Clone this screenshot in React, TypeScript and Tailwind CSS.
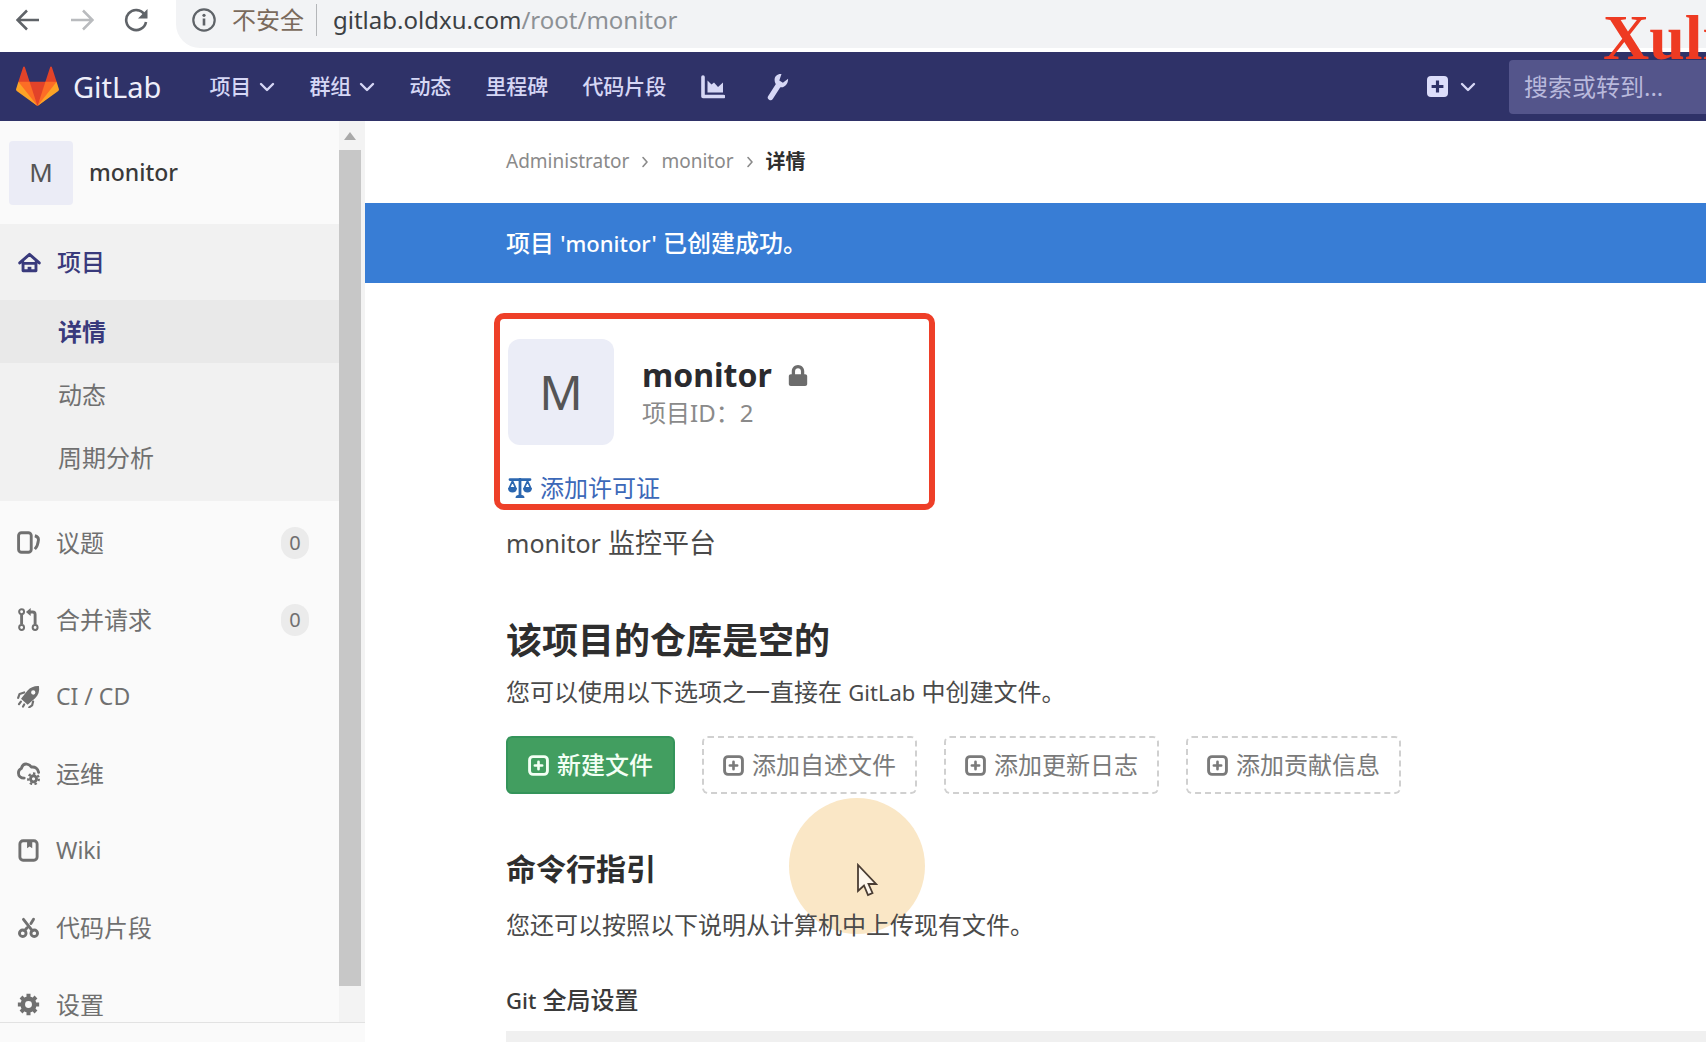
import React from "react";
import { FaLock } from "react-icons/fa";

type IconProps = { className?: string };

const stroke = {
  fill: "none",
  stroke: "currentColor",
  strokeWidth: 2,
  strokeLinecap: "round" as const,
  strokeLinejoin: "round" as const,
};

function Chevron({ className }: IconProps) {
  return (
    <svg viewBox="0 0 16 10" className={className} aria-hidden="true">
      <path d="M2 2l6 6 6-6" {...stroke} strokeWidth={2.4} />
    </svg>
  );
}

function CrumbChevron() {
  return (
    <svg viewBox="0 0 8 12" className="h-3 w-2 text-[#8a8a8a]" aria-hidden="true">
      <path d="M2 1.500l4 4.500-4 4.500" {...stroke} strokeWidth={1.6} />
    </svg>
  );
}

function Tanuki() {
  return (
    <svg viewBox="0 0 36 36" className="h-[43px] w-[43px]" aria-hidden="true">
      <path fill="#e24329" d="M2 14l9.380 9v-9l-4-12.280c-.205-.632-1.176-.632-1.380 0z" />
      <path fill="#e24329" d="M34 14l-9.380 9v-9l4-12.280c.205-.632 1.176-.632 1.380 0z" />
      <path fill="#e24329" d="M18 34.380L3 14h30z" />
      <path fill="#fc6d26" d="M18 34.380L11.380 14H2l4 11z" />
      <path fill="#fc6d26" d="M18 34.380L24.620 14H34l-4 11z" />
      <path fill="#fca326" d="M2 14L.1 20.160c-.18.565 0 1.200.5 1.560L18 34.380z" />
      <path fill="#fca326" d="M34 14l1.900 6.160c.18.565 0 1.200-.5 1.560L18 34.380z" />
    </svg>
  );
}

function ChartIcon({ className }: IconProps) {
  return (
    <svg viewBox="0 0 24 24" className={className} aria-hidden="true">
      <path d="M2 2v19.500h20.500" {...stroke} strokeWidth={3.6} />
      <path d="M6.500 17.500V5.500l4 4 2.500-2 4 4.500 5-4.500v10z" fill="currentColor" />
    </svg>
  );
}

function WrenchIcon({ className }: IconProps) {
  return (
    <svg viewBox="0 0 22 28" className={className} aria-hidden="true">
      <path d="M3.500 24.500L11.500 12" {...stroke} strokeWidth={5.400} />
      <path d="M14.500 1C10.500.6 7.500 3.200 7.600 7c.1 4 3 7.500 7 7.300 3.600-.2 6.600-3.600 6.500-8.600l-5.200 4-3.600-2.300z" fill="currentColor" />
    </svg>
  );
}

function ScaleIcon({ className }: IconProps) {
  return (
    <svg viewBox="0 0 24 20" className={className} aria-hidden="true">
      <path d="M2 1.600h20M12 1v16" {...stroke} strokeWidth={2.800} />
      <path d="M7.500 20c0-2 1.500-3.200 4.500-3.200s4.500 1.200 4.500 3.200z" fill="currentColor" />
      <path d="M4.500 3L1.300 10h6.400zM19.500 3l-3.200 7h6.400z" {...stroke} strokeWidth={1.800} />
      <path d="M0 10h9c0 3-2 4.600-4.500 4.600S0 13 0 10zM15 10h9c0 3-2 4.600-4.500 4.600S15 13 15 10z" fill="currentColor" />
    </svg>
  );
}

function HomeIcon({ className }: IconProps) {
  return (
    <svg viewBox="0 0 16 16" className={className} aria-hidden="true">
      <path d="M1.200 8.300L8 2.300l6.800 6M3.500 8v5.700h9V8M3.500 8.600h9" {...stroke} />
      <path d="M6.700 11h2.600v3H6.700z" fill="currentColor" />
    </svg>
  );
}

function IssuesIcon({ className }: IconProps) {
  return (
    <svg viewBox="0 0 16 16" className={className} aria-hidden="true">
      <rect x="1.100" y="1.200" width="8.800" height="13.600" rx="2" {...stroke} />
      <path d="M12.400 3.300c1.900.5 2.700 1.300 2.500 3-.2 2.300-.8 4.500-2.500 6.300" {...stroke} strokeLinecap="butt" />
    </svg>
  );
}

function MergeIcon({ className }: IconProps) {
  return (
    <svg viewBox="0 0 16 16" className={className} aria-hidden="true">
      <g {...stroke} strokeWidth={1.400}>
        <circle cx="3.200" cy="2.600" r="1.700" />
        <circle cx="3.200" cy="13.600" r="1.700" />
        <circle cx="12.600" cy="13.600" r="1.700" />
      </g>
      <path d="M3.200 4.500v7M12.600 11.500V4.500c0-1.200-.5-1.700-1.700-1.700H9" {...stroke} strokeLinecap="butt" />
      <path d="M9.500 0v5.600L6.200 2.800z" fill="currentColor" />
    </svg>
  );
}

function RocketIcon({ className }: IconProps) {
  return (
    <svg viewBox="0 0 16 16" className={className} aria-hidden="true">
      <path fillRule="evenodd" fill="currentColor" d="M15.300.8c.5 3.400-.4 6.200-2.700 8.500l-5.200 4.500-4.600-4.300L7.200 4C9.500 1.700 12 .6 15.300.8zM11.300 3.700a1.500 1.500 0 1 0 0 3 1.500 1.500 0 0 0 0-3z" />
      <path d="M5 5.200L1.800 6.200.8 9M11.200 11.500l-.7 2.700-2 1.300M2.700 11.500l-1.300 1.800M5 13.500l-.8 1.500" {...stroke} strokeWidth={1.500} />
    </svg>
  );
}

function OpsIcon({ className }: IconProps) {
  return (
    <svg viewBox="0 0 16 16" className={className} aria-hidden="true">
      <path d="M5 11.200c-2.500 0-4-1.600-4-3.600 0-1.500.8-2.600 2-3.100C3.700 2.300 5.200 1.200 7 1.500c1.400.2 2.400 1 3 2 2.700-.3 4.600 1.200 5 3.700" {...stroke} />
      <circle cx="11.500" cy="11.700" r="2.100" {...stroke} />
      <circle cx="11.500" cy="11.700" r="3.700" {...stroke} strokeLinecap="butt" strokeWidth={1.600} strokeDasharray="1.660 1.660" />
    </svg>
  );
}

function WikiIcon({ className }: IconProps) {
  return (
    <svg viewBox="0 0 16 16" className={className} aria-hidden="true">
      <rect x="2" y="1.200" width="12" height="13.600" rx="2.200" {...stroke} />
      <path d="M7 1.500h3.600v5L8.800 5.200 7 6.500z" fill="currentColor" />
    </svg>
  );
}

function SnippetIcon({ className }: IconProps) {
  return (
    <svg viewBox="0 0 16 16" className={className} aria-hidden="true">
      <circle cx="4" cy="12" r="2.300" {...stroke} />
      <circle cx="12" cy="12" r="2.300" {...stroke} />
      <path d="M4.500 2.300l6.200 8M11.500 2.300L9.700 5.200M7 8.200l-1.700 2" {...stroke} />
    </svg>
  );
}

function GearIcon({ className }: IconProps) {
  return (
    <svg viewBox="0 0 16 16" className={className} aria-hidden="true">
      <circle cx="8" cy="8" r="4" {...stroke} strokeWidth={3.200} />
      <path
        d="M8 .6v2.400M8 13v2.400M.6 8H3M13 8h2.400M2.800 2.800l1.600 1.600M11.600 11.600l1.600 1.600M2.800 13.200l1.600-1.600M11.600 4.400l1.600-1.600"
        {...stroke}
        strokeLinecap="butt"
        strokeWidth={2.800}
      />
    </svg>
  );
}

function PlusBox({ className }: IconProps) {
  return (
    <svg viewBox="0 0 16 16" className={className} aria-hidden="true">
      <rect x="1.200" y="1.200" width="13.600" height="13.600" rx="2.600" {...stroke} strokeWidth={2.200} />
      <path d="M8 5.200v5.600M5.200 8h5.600" {...stroke} />
    </svg>
  );
}

function SolidPlus({ className }: IconProps) {
  return (
    <svg viewBox="0 0 16 16" className={className} aria-hidden="true">
      <rect width="16" height="16" rx="3" fill="currentColor" />
      <path d="M8 3.500v9M3.500 8h9" stroke="#2f3268" strokeWidth="2.400" />
    </svg>
  );
}

function BrowserBar() {
  return (
    <div className="flex h-[52px] shrink-0 bg-white pl-4">
      <div className="flex h-10 items-center gap-[30px] pr-7 text-[#5f6368]">
        <button aria-label="Back">
          <svg viewBox="0 0 24 24" className="h-6 w-6"><path d="M23 12H2M11 2.500L1.500 12l9.500 9.500" {...stroke} strokeWidth={2.500} strokeLinecap="butt" strokeLinejoin="miter" /></svg>
        </button>
        <button aria-label="Forward" className="text-[#b9bbbe]">
          <svg viewBox="0 0 24 24" className="h-6 w-6"><path d="M1 12h21M13 2.500l9.500 9.500-9.500 9.500" {...stroke} strokeWidth={2.500} strokeLinecap="butt" strokeLinejoin="miter" /></svg>
        </button>
        <button aria-label="Reload">
          <svg viewBox="0 0 24 24" className="h-6 w-6">
            <path d="M20.500 6.500A10 10 0 1 0 22 14" {...stroke} strokeWidth={2.600} strokeLinecap="butt" />
            <path d="M23.500 1v9.500H14z" fill="currentColor" />
          </svg>
        </button>
      </div>
      <div className="flex h-12 flex-1 items-start rounded-bl-[24px] bg-[#f2f3f5] pl-4">
        <div className="flex h-10 items-center">
          <svg viewBox="0 0 24 24" className="mr-4 h-6 w-6 text-[#5f6368]" aria-hidden="true">
            <circle cx="12" cy="12" r="10.700" {...stroke} strokeWidth={2.200} />
            <path d="M12 10.500v7" {...stroke} strokeWidth={2.600} strokeLinecap="butt" />
            <circle cx="12" cy="7.300" r="1.600" fill="currentColor" />
          </svg>
          <span className="text-2xl text-[#7a6a5c]">不安全</span>
          <span className="mr-4 ml-3 h-8 w-px bg-[#b4b6b9]" />
          <span className="text-2xl text-[#3c4043]">gitlab.oldxu.com<span className="text-[#8d9195]">/root/monitor</span></span>
        </div>
      </div>
    </div>
  );
}

function NavBar() {
  return (
    <header className="flex h-[69px] shrink-0 items-center bg-[#2f3268] pl-4 text-[#d6d7f5]">
      <a href="#" className="flex items-center gap-[14px] text-[29px] text-[#eeeefa]">
        <Tanuki />
        GitLab
      </a>
      <nav className="ml-12 flex items-center gap-[34px] text-[21px] font-medium">
        <button className="flex items-center gap-2">项目<Chevron className="h-[10px] w-4" /></button>
        <button className="flex items-center gap-2">群组<Chevron className="h-[10px] w-4" /></button>
        <a href="#">动态</a>
        <a href="#">里程碑</a>
        <a href="#">代码片段</a>
        <a href="#" aria-label="Analytics" className="ml-px">
          <ChartIcon className="h-6 w-6" />
        </a>
        <a href="#" aria-label="Admin" className="ml-2">
          <WrenchIcon className="h-7 w-[22px]" />
        </a>
      </nav>
      <button aria-label="New" className="mr-[33px] ml-auto flex items-center gap-3">
        <SolidPlus className="h-[21px] w-[21px] text-[#dcddfa]" />
        <Chevron className="h-[10px] w-4" />
      </button>
      <input
        aria-label="搜索"
        placeholder="搜索或转到..."
        className="h-[54px] w-[197px] rounded-l bg-[#54558b] pl-[15px] text-2xl outline-none placeholder:text-[#b9b9dc]"
      />
    </header>
  );
}

const items = [
  { label: "议题", Icon: IssuesIcon, count: 0 },
  { label: "合并请求", Icon: MergeIcon, count: 0 },
  { label: "CI / CD", Icon: RocketIcon, latin: true },
  { label: "运维", Icon: OpsIcon },
  { label: "Wiki", Icon: WikiIcon, latin: true },
  { label: "代码片段", Icon: SnippetIcon },
  { label: "设置", Icon: GearIcon },
];

function Sidebar() {
  return (
    <aside className="flex w-[365px] shrink-0 flex-col bg-[#fafafa]">
      <div className="flex min-h-0 flex-1">
        <nav className="flex-1 overflow-hidden text-2xl text-[#707070]">
          <a href="#" className="flex h-[103px] items-center gap-4 pl-[9px] text-[#3a3a3a]">
            <span className="flex h-16 w-16 items-center justify-center rounded bg-[#ebecf6] text-[26px] text-[#555]">M</span>
            <span className="text-[23px] font-medium">monitor</span>
          </a>
          <div className="mb-[3px] bg-[#f1f1f1] pb-3">
            <a href="#" className="flex h-[76px] items-center gap-4 pl-[18px] font-medium text-[#393a7c]">
              <HomeIcon className="h-[23px] w-[23px]" />
              项目
            </a>
            <a href="#" className="flex h-[63px] items-center bg-[#e9e9e9] pl-[58px] font-bold text-[#393a7c]">详情</a>
            <a href="#" className="flex h-[63px] items-center pl-[58px]">动态</a>
            <a href="#" className="flex h-[63px] items-center pl-[58px]">周期分析</a>
          </div>
          {items.map(({ label, Icon, count, latin }) => (
            <a key={label} href="#" className="flex h-[77px] items-center pr-[30px] pl-[17px]">
              <Icon className="mr-4 h-[23px] w-[23px] shrink-0" />
              <span className={latin ? "text-[23px]" : ""}>{label}</span>
              {count !== undefined && (
                <span className="ml-auto flex h-8 w-7 items-center justify-center rounded-full bg-[#ebebeb] text-xl">{count}</span>
              )}
            </a>
          ))}
        </nav>
        <div className="flex w-[26px] flex-col items-center bg-[#f3f3f3] pr-1">
          <div className="flex h-[29px] items-center">
            <svg viewBox="0 0 12 8" className="h-2 w-3 text-[#a9a9a9]" aria-hidden="true"><path d="M6 0l6 8H0z" fill="currentColor" /></svg>
          </div>
          <div className="mb-9 w-[22px] flex-1 bg-[#c7c7c7]" />
        </div>
      </div>
      <div className="h-5 border-t border-[#e2e2e2]" />
    </aside>
  );
}

function DashedButton({ children }: { children: React.ReactNode }) {
  return (
    <button className="flex h-[58px] items-center gap-2 rounded-md border-2 border-dashed border-[#d0d0d0] px-[19px] text-[#7a7a7a]">
      <PlusBox className="h-[21px] w-[21px]" />
      {children}
    </button>
  );
}

function Main() {
  return (
    <main className="relative min-w-0 flex-1 overflow-hidden bg-white text-2xl text-[#4a4a4a]">
      <nav className="flex h-[82px] items-center gap-3 pl-[141px] text-[19px] text-[#8a8a8a]">
        <a href="#">Administrator</a>
        <CrumbChevron />
        <a href="#">monitor</a>
        <CrumbChevron />
        <a href="#" className="text-xl font-bold text-[#2e2e2e]">详情</a>
      </nav>
      <div className="flex h-20 items-center bg-[#387dd5] pl-[141px] font-medium text-white">
        <p>项目 <span className="text-[22px]">'monitor'</span> 已创建成功。</p>
      </div>

      <div className="absolute top-[677px] left-[424px] h-[136px] w-[136px] rounded-full bg-[#fae7c6]" />

      <div className="relative pl-[141px]">
        <section className="relative pt-14">
          <div className="flex gap-7 pl-[2px]">
            <div className="flex h-[106px] w-[106px] items-center justify-center rounded-xl bg-[#ebedf7] text-5xl text-[#555]">M</div>
            <div className="pt-4">
              <h1 className="flex h-10 items-center gap-4 text-[32px] font-bold text-[#2a2a2e]">
                monitor
                <FaLock className="h-[21px] w-5 text-[#6c6c6c]" />
              </h1>
              <p className="h-9 leading-9 text-[#8a8a8a]">项目ID：2</p>
            </div>
          </div>
          <a href="#" className="mt-[27px] flex h-8 items-center gap-2 pl-[2px] text-[#3c68b8]">
            <ScaleIcon className="h-5 w-6 text-[#2c67b0]" />
            添加许可证
          </a>
          <span className="pointer-events-none absolute top-[30px] -bottom-[6px] -left-3 w-[441px] rounded-[10px] border-[6px] border-[#ee3f28]" />
        </section>
        <p className="mt-[19px] text-[27px] leading-10"><span className="text-[25px]">monitor</span> 监控平台</p>
        <h2 className="mt-[54px] text-4xl leading-[48px] font-bold text-[#2e2e2e]">该项目的仓库是空的</h2>
        <p className="mt-[9px] leading-9">您可以使用以下选项之一直接在 <span className="text-[22px]">GitLab</span> 中创建文件。</p>
        <div className="mt-[26px] flex gap-[27px]">
          <button className="flex h-[58px] items-center gap-2 rounded-md border-2 border-[#34945a] bg-[#429e60] px-5 font-medium text-[#f3fff4]">
            <PlusBox className="h-[21px] w-[21px]" />
            新建文件
          </button>
          <DashedButton>添加自述文件</DashedButton>
          <DashedButton>添加更新日志</DashedButton>
          <DashedButton>添加贡献信息</DashedButton>
        </div>
        <h3 className="mt-[55px] text-3xl leading-10 font-bold text-[#2e2e2e]">命令行指引</h3>
        <p className="mt-[18px] leading-9">您还可以按照以下说明从计算机中上传现有文件。</p>
        <h5 className="mt-[41px] leading-8 font-medium text-[#3a3a3a]"><span className="text-[22px]">Git</span> 全局设置</h5>
        <div className="mt-[15px] h-16 bg-[#f0f0f0]" />
      </div>

      <svg viewBox="0 0 22 34" className="absolute top-[742px] left-[491px] h-[34px] w-[22px]" aria-hidden="true">
        <path d="M2 2v26l6-5.500 4 9.500 4.500-2-4-9H20z" fill="#fdf6ec" stroke="#4a3d33" strokeWidth="1.800" />
      </svg>
    </main>
  );
}

export default function App() {
  return (
    <div className="relative flex h-screen flex-col overflow-hidden bg-white font-['Noto_Sans','Noto_Sans_CJK_SC',sans-serif]" lang="zh-CN">
      <BrowserBar />
      <NavBar />
      <div className="flex min-h-0 flex-1">
        <Sidebar />
        <Main />
      </div>
      <div className="pointer-events-none absolute top-0 right-0 w-[103px] overflow-hidden font-['Liberation_Serif',serif] text-[64px] leading-[76px] font-bold whitespace-nowrap text-[#ee3a22]">
        Xuli
      </div>
    </div>
  );
}
